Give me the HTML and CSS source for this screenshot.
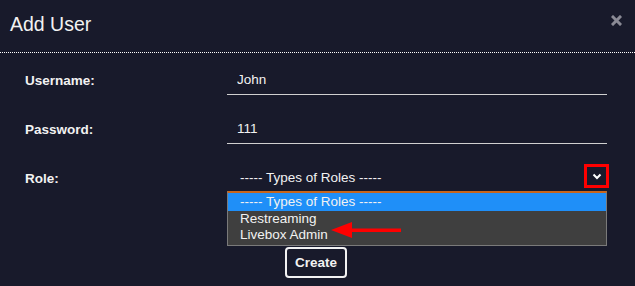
FILE: index.html
```html
<!DOCTYPE html>
<html lang="en">
<head>
    <meta charset="UTF-8">
    <meta name="viewport" content="width=device-width, initial-scale=1.0">
    <title>Add User</title>
    <link rel="stylesheet" href="styles.css">
</head>
<body>
    <div class="modal">
        <div class="modal-header">
            <h2>Add User</h2>
            <span class="close">
                <svg width="11" height="11" viewBox="0 0 11 11">
                    <path d="M2 2 L9 9 M9 2 L2 9" stroke="#8a8a95" stroke-width="3" stroke-linecap="square"/>
                </svg>
            </span>
        </div>

        <form class="user-form">
            <label for="username">Username:</label>
            <div class="field"><input type="text" id="username" value="John"></div>

            <label for="password">Password:</label>
            <div class="field"><input type="text" id="password" value="111"></div>

            <label for="role">Role:</label>
            <div class="field select-field">
                <div class="select-value">----- Types of Roles -----</div>
                <span class="chevron">
                    <svg width="10" height="7" viewBox="0 0 10 7">
                        <path d="M1.5 1.5 L5 5 L8.5 1.5" stroke="#fff" stroke-width="2" fill="none"/>
                    </svg>
                </span>
                <ul class="options">
                    <li class="selected">----- Types of Roles -----</li>
                    <li>Restreaming</li>
                    <li>Livebox Admin</li>
                </ul>
                <span class="arrow">
                    <svg width="72" height="18" viewBox="0 0 72 18">
                        <polygon points="0,9 21,1 21,17" fill="#f00"/>
                        <rect x="20" y="7.5" width="50" height="3.5" fill="#f00"/>
                    </svg>
                </span>
            </div>

            <div class="actions">
                <button type="button">Create</button>
            </div>
        </form>
    </div>
</body>
</html>
```

FILE: styles.css
```css
body {
    margin: 0;
    background-color: #181a2b;
    font-family: "Liberation Sans", Arial, sans-serif;
    color: #f2f2f2;
}
.modal {
    width: 635px;
    height: 286px;
    overflow: hidden;
}
.modal-header {
    height: 52px;
    display: flex;
    align-items: center;
    justify-content: space-between;
    padding: 0 13px 0 10px;
    border-bottom: 1px dotted #fff;
    margin-bottom: 13px;
}
.modal-header h2 {
    margin: 0 0 4px;
    font-size: 19.5px;
    font-weight: normal;
}
.close {
    display: flex;
    margin-bottom: 12px;
}
.user-form {
    display: grid;
    grid-template-columns: 202px 380px;
    row-gap: 20px;
    padding: 0 28px 0 25px;
    align-items: center;
}
label {
    font-size: 13.5px;
    font-weight: bold;
}
.field {
    position: relative;
    height: 29px;
}
input {
    width: 100%;
    height: 29px;
    box-sizing: border-box;
    background: transparent;
    border: none;
    border-bottom: 1px solid #d0d0d0;
    color: #f2f2f2;
    font-family: inherit;
    font-size: 13.5px;
    padding: 0 10px 2px;
}
.select-value {
    height: 29px;
    line-height: 27px;
    font-size: 13.5px;
    padding-left: 13px;
}
.chevron {
    position: absolute;
    right: -2px;
    top: 0;
    width: 19px;
    height: 18px;
    border: 3px solid #f00;
    display: flex;
    align-items: center;
    justify-content: center;
}
.options {
    position: absolute;
    left: 0;
    top: 27px;
    width: 380px;
    box-sizing: border-box;
    margin: 0;
    padding: 0 0 2px;
    list-style: none;
    background-color: #3f3f3f;
    border: 1px solid #7a7a7a;
    border-top: 2px solid #c8661c;
    font-size: 13.5px;
}
.options li {
    height: 16px;
    line-height: 16px;
    padding-left: 12px;
}
.options li.selected {
    height: 18px;
    line-height: 18px;
    background-color: #1f8ff8;
}
.arrow {
    position: absolute;
    left: 104px;
    top: 57px;
    display: flex;
}
.actions {
    grid-column: 1 / 3;
    display: flex;
    justify-content: center;
    margin-top: 34px;
}
button {
    background: transparent;
    color: #f2f2f2;
    border: 2px solid #f2f2f2;
    border-radius: 4px;
    font-family: inherit;
    font-size: 13.5px;
    font-weight: bold;
    width: 62px;
    height: 31px;
    padding: 0;
}
```
